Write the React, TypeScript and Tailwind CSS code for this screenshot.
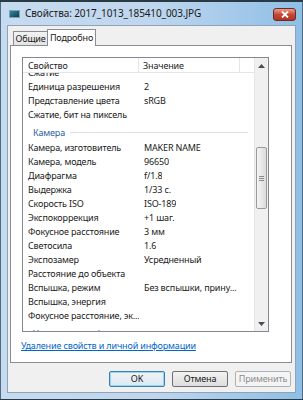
import React from 'react'

const font = { fontFamily: '"Noto Sans", "Open Sans", sans-serif' }

type Row = { name: string; value?: string; group?: boolean }

const rows: Row[] = [
  { name: 'Сжатие' },
  { name: 'Единица разрешения', value: '2' },
  { name: 'Представление цвета', value: 'sRGB' },
  { name: 'Сжатие, бит на пиксель' },
  { name: 'Камера', group: true },
  { name: 'Камера, изготовитель', value: 'MAKER NAME' },
  { name: 'Камера, модель', value: '96650' },
  { name: 'Диафрагма', value: 'f/1.8' },
  { name: 'Выдержка', value: '1/33 с.' },
  { name: 'Скорость ISO', value: 'ISO-189' },
  { name: 'Экспокоррекция', value: '+1 шаг.' },
  { name: 'Фокусное расстояние', value: '3 мм' },
  { name: 'Светосила', value: '1.6' },
  { name: 'Экспозамер', value: 'Усредненный' },
  { name: 'Расстояние до объекта' },
  { name: 'Вспышка, режим', value: 'Без вспышки, прину...' },
  { name: 'Вспышка, энергия' },
  { name: 'Фокусное расстояние, эк...' },
  { name: 'Уменьшенная фото', group: true },
]

function Scrollbar() {
  return (
    <div className="w-[14px] flex flex-col bg-[#f0f0f0] border-l border-[#e6e6e6]">
      <div className="h-[15px] flex items-center justify-center">
        <svg width="7" height="4" viewBox="0 0 7 4">
          <path d="M0 4 L3.5 0 L7 4 Z" fill="#4d4d4d" />
        </svg>
      </div>
      <div className="h-[74px]" />
      <div className="h-[62px] mx-[1px] rounded-[2px] border border-[#9a9a9a] bg-gradient-to-r from-[#f4f4f4] to-[#dcdcdc] flex items-center justify-center">
        <div className="flex flex-col gap-[1px]">
          <div className="w-[5px] h-px bg-[#8a8a8a]" />
          <div className="w-[5px] h-px bg-[#8a8a8a]" />
          <div className="w-[5px] h-px bg-[#8a8a8a]" />
        </div>
      </div>
      <div className="flex-1" />
      <div className="h-[15px] flex items-center justify-center">
        <svg width="7" height="4" viewBox="0 0 7 4">
          <path d="M0 0 L3.5 4 L7 0 Z" fill="#4d4d4d" />
        </svg>
      </div>
    </div>
  )
}

const txt = 'text-[9px] tracking-[-0.15px]'

function ListView() {
  return (
    <div className="ml-[11px] mt-[11px] w-[247px] h-[275px] border border-[#828790] bg-white flex">
      <div className="flex-1 flex flex-col min-w-0">
        <div className={'h-[15px] flex text-[#1e1e1e] bg-white border-b border-[#e5e5e5] shrink-0 ' + txt}>
          <div className="w-[116px] pl-[5px] border-r border-[#e5e5e5] leading-[15px]">Свойство</div>
          <div className="w-[101px] pl-[4px] border-r border-[#e5e5e5] leading-[15px]">Значение</div>
          <div className="flex-1" />
        </div>
        <div className="flex-1 overflow-hidden">
          <div className="-mt-[7px]">
            {rows.map((r, i) =>
              r.group ? (
                <div key={i} className="h-[19px] flex items-center pl-[10px] pr-[6px] pt-[2px]">
                  <span className={'text-[#2a5fa8] whitespace-nowrap ' + txt}>{r.name}</span>
                  <div className="flex-1 ml-[5px] h-px bg-[#d9e2ea]" />
                </div>
              ) : (
                <div key={i} className={'h-[14px] flex text-[#1a1a1a] leading-[14px] whitespace-nowrap ' + txt}>
                  <div className="w-[116px] pl-[5px] overflow-hidden">{r.name}</div>
                  <div className="pl-[5px] overflow-hidden">{r.value}</div>
                </div>
              )
            )}
          </div>
        </div>
      </div>
      <Scrollbar />
    </div>
  )
}

function Btn({ label, def, disabled }: { label: string; def?: boolean; disabled?: boolean }) {
  return (
    <div
      className={
        'w-[56px] h-[16px] rounded-[2px] flex items-center justify-center ' +
        txt +
        ' ' +
        (def
          ? 'border border-[#3c7fb1] bg-gradient-to-b from-[#f2f2f2] to-[#d9e9f4] text-[#1a1a1a] shadow-[inset_0_0_0_1px_#9ad4f5]'
          : disabled
          ? 'border border-[#adb2b5] bg-[#f4f4f4] text-[#8d8d8d]'
          : 'border border-[#707070] bg-gradient-to-b from-[#f2f2f2] to-[#dddddd] text-[#1a1a1a]')
      }
    >
      {label}
    </div>
  )
}

export default function App() {
  return (
    <div style={font} className="w-[303px] h-[400px] bg-[#0d1b24] flex flex-col overflow-hidden">
      <div className="h-[2px] shrink-0 bg-[#2a3a44]" />
      <div className="flex-1 flex flex-col bg-gradient-to-r from-[#c6dbef] via-[#bfd6ee] to-[#8ebfe6] border-x border-[#4f6b82]">
        {/* title bar */}
        <div className="h-[23px] flex items-center relative shrink-0">
          <div className="ml-[8px] w-[11px] h-[8px] mt-[1px] bg-gradient-to-br from-[#2f8fa3] to-[#143a4f] border border-[#7aa3b5]" />
          <div className="ml-[5px] text-[10px] text-[#1b1b1b] tracking-[-0.1px]">Свойства: 2017_1013_185410_003.JPG</div>
          <div className="absolute right-[6px] top-[6px] w-[23px] h-[13px] rounded-[3px] border border-[#6e2a20] bg-gradient-to-b from-[#e8a08f] via-[#c7463a] to-[#b2331f] flex items-center justify-center">
            <svg width="8" height="7" viewBox="0 0 8 7">
              <path d="M1 0.5 L7 6.5 M7 0.5 L1 6.5" stroke="#fff" strokeWidth="1.8" />
            </svg>
          </div>
        </div>
        {/* client */}
        <div className="mx-[6px] flex-1 bg-[#f0f0f0] border border-[#8ea3b8] flex flex-col">
          <div className="h-[19px] flex items-end pl-[5px] shrink-0">
            <div className={'w-[35px] h-[14px] border border-b-0 border-[#898c95] bg-gradient-to-b from-[#f2f2f2] to-[#e3e3e3] text-[#1a1a1a] flex items-center justify-center ' + txt}>
              Общие
            </div>
            <div className={'w-[49px] h-[17px] -ml-px border border-b-0 border-[#898c95] bg-white text-[#1a1a1a] flex items-start justify-center pt-[1px] relative top-px ' + txt}>
              Подробно
            </div>
          </div>
          <div className="ml-[2px] mr-[3px] h-[318px] bg-white border border-[#898c95] flex flex-col">
            <ListView />
            <div className={'ml-[10px] mt-[7px] text-[#0066cc] underline ' + txt}>
              Удаление свойств и личной информации
            </div>
          </div>
          <div className="flex justify-end gap-[7px] mr-[4px] mt-[8px]">
            <Btn label="OK" def />
            <Btn label="Отмена" />
            <Btn label="Применить" disabled />
          </div>
        </div>
        <div className="h-[6px] shrink-0" />
      </div>
      <div className="h-[1px] shrink-0 bg-[#2a3a44]" />
    </div>
  )
}
